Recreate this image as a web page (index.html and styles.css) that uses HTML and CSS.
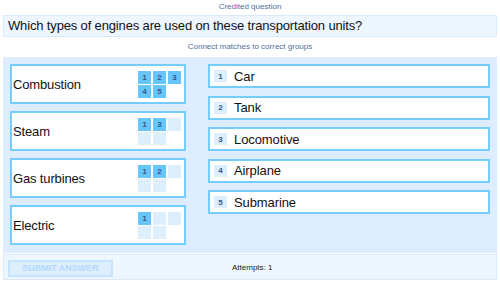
FILE: index.html
```html
<!DOCTYPE html>
<html>
<head>
<meta charset="utf-8">
<link rel="stylesheet" href="styles.css">
</head>
<body>
<div class="wrap">
  <div class="caption">Credited question</div>
  <div class="question">Which types of engines are used on these transportation units?</div>
  <div class="caption hint">Connect matches to correct groups</div>
  <div class="panel">
    <div class="groups">
      <div class="group">
        <span class="glabel">Combustion</span>
        <div class="chips">
          <span class="chip on">1</span><span class="chip on">2</span><span class="chip on">3</span>
          <span class="chip on">4</span><span class="chip on">5</span><span class="chip none"></span>
        </div>
      </div>
      <div class="group">
        <span class="glabel">Steam</span>
        <div class="chips">
          <span class="chip on">1</span><span class="chip on">3</span><span class="chip"></span>
          <span class="chip"></span><span class="chip"></span><span class="chip none"></span>
        </div>
      </div>
      <div class="group">
        <span class="glabel">Gas turbines</span>
        <div class="chips">
          <span class="chip on">1</span><span class="chip on">2</span><span class="chip"></span>
          <span class="chip"></span><span class="chip"></span><span class="chip none"></span>
        </div>
      </div>
      <div class="group">
        <span class="glabel">Electric</span>
        <div class="chips">
          <span class="chip on">1</span><span class="chip"></span><span class="chip"></span>
          <span class="chip"></span><span class="chip"></span><span class="chip none"></span>
        </div>
      </div>
    </div>
    <div class="items">
      <div class="item"><span class="num">1</span><span class="ilabel">Car</span></div>
      <div class="item"><span class="num">2</span><span class="ilabel">Tank</span></div>
      <div class="item"><span class="num">3</span><span class="ilabel">Locomotive</span></div>
      <div class="item"><span class="num">4</span><span class="ilabel">Airplane</span></div>
      <div class="item"><span class="num">5</span><span class="ilabel">Submarine</span></div>
    </div>
  </div>
  <div class="footer">
    <button class="submit">SUBMIT ANSWER</button>
    <span class="attempts">Attempts: 1</span>
  </div>
</div>
</body>
</html>
```

FILE: styles.css
```css
html, body {
  margin: 0;
  padding: 0;
  background: #ffffff;
  font-family: "Liberation Sans", Arial, sans-serif;
}
.wrap {
  padding: 0 3px;
  width: 494px;
}
.caption {
  height: 15px;
  line-height: 13px;
  text-align: center;
  font-size: 8px;
  color: #4e6f9c;
}
.hint {
  height: 20px;
  line-height: 20px;
}
.question {
  box-sizing: border-box;
  height: 22px;
  line-height: 20px;
  padding-left: 4px;
  background: #eef6ff;
  border: 1px solid #dbeafb;
  font-size: 13px;
  letter-spacing: -0.15px;
  color: #111;
}
.panel {
  box-sizing: border-box;
  height: 196px;
  background: #deedfd;
  padding: 7px 7px 0 7px;
  display: flex;
  gap: 22px;
}
.groups {
  width: 176px;
  display: flex;
  flex-direction: column;
  gap: 7px;
}
.group {
  box-sizing: border-box;
  height: 40px;
  background: #fff;
  border: 2px solid #74cdfd;
  display: flex;
  align-items: center;
  justify-content: space-between;
  padding: 0 3px 0 1px;
}
.glabel {
  font-size: 13px;
  letter-spacing: -0.15px;
  color: #111;
}
.chips {
  display: grid;
  grid-template-columns: repeat(3, 13px);
  grid-auto-rows: 13px;
  gap: 1px 2px;
}
.chip {
  background: #ddeefd;
  font-size: 8px;
  font-weight: bold;
  color: #35598a;
  display: flex;
  align-items: center;
  justify-content: center;
}
.chip.on {
  background: #66c6fb;
}
.chip.none {
  background: transparent;
}
.items {
  flex: 1;
  display: flex;
  flex-direction: column;
  gap: 7.5px;
}
.item {
  box-sizing: border-box;
  height: 24px;
  background: #fff;
  border: 2px solid #74cdfd;
  display: flex;
  align-items: center;
  padding-left: 4px;
}
.num {
  width: 13px;
  height: 12px;
  background: #ddeefd;
  font-size: 8px;
  font-weight: bold;
  color: #35598a;
  display: flex;
  align-items: center;
  justify-content: center;
  margin-right: 7px;
}
.ilabel {
  font-size: 13px;
  letter-spacing: -0.1px;
  color: #111;
}
.footer {
  box-sizing: border-box;
  margin-top: 1px;
  height: 26px;
  background: #eef6ff;
  border: 1px solid #dbeafb;
  display: flex;
  align-items: center;
  padding-left: 4px;
}
.submit {
  box-sizing: border-box;
  width: 105px;
  height: 17px;
  background: #ddeefd;
  border: 2px solid #c6e3fd;
  color: #b3d9fd;
  font-family: "Liberation Sans", Arial, sans-serif;
  font-size: 9px;
  font-weight: bold;
  padding: 0;
  margin-top: 2px;
}
.attempts {
  margin-left: 119px;
  font-size: 8px;
  color: #222;
}
```
